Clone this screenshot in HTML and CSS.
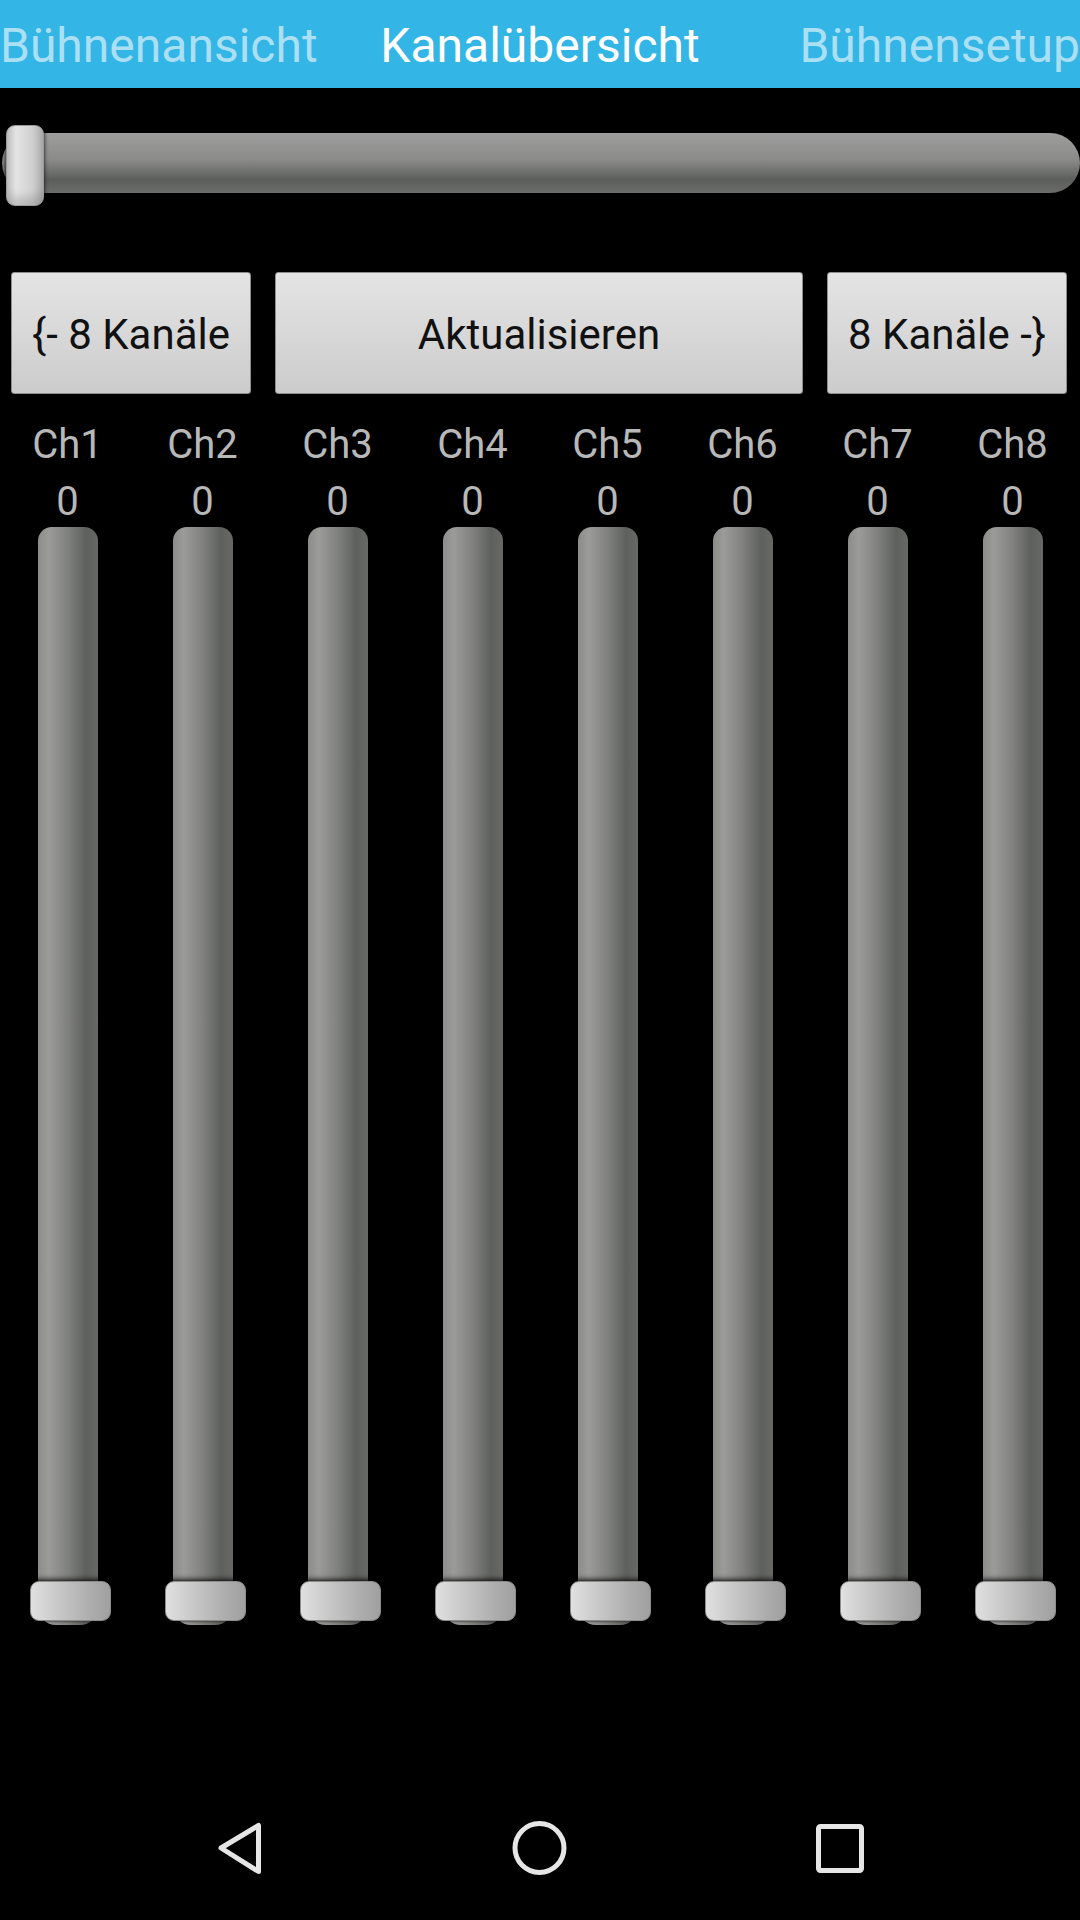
FILE: index.html
```html
<!DOCTYPE html>
<html lang="de">
<head>
    <meta charset="UTF-8">
    <meta name="viewport" content="width=device-width, initial-scale=1.0">
    <title>Kanalübersicht</title>
    <link rel="stylesheet" href="styles.css">
</head>
<body>
<div class="screen">

    <!-- Title strip -->
    <header class="tabs">
        <span class="tab">Bühnenansicht</span>
        <span class="tab active">Kanalübersicht</span>
        <span class="tab last">Bühnensetup</span>
    </header>

    <!-- Master slider -->
    <div class="seek">
        <div class="seek-track"></div>
        <div class="seek-thumb"></div>
    </div>

    <!-- Buttons -->
    <div class="actions">
        <button class="btn">{- 8 Kanäle</button>
        <button class="btn">Aktualisieren</button>
        <button class="btn">8 Kanäle -}</button>
    </div>

    <!-- Channel faders -->
    <div class="channels">
        <div class="channel">
            <span class="ch-name">Ch1</span>
            <span class="ch-value">0</span>
            <div class="fader"><div class="fader-thumb"></div></div>
        </div>
        <div class="channel">
            <span class="ch-name">Ch2</span>
            <span class="ch-value">0</span>
            <div class="fader"><div class="fader-thumb"></div></div>
        </div>
        <div class="channel">
            <span class="ch-name">Ch3</span>
            <span class="ch-value">0</span>
            <div class="fader"><div class="fader-thumb"></div></div>
        </div>
        <div class="channel">
            <span class="ch-name">Ch4</span>
            <span class="ch-value">0</span>
            <div class="fader"><div class="fader-thumb"></div></div>
        </div>
        <div class="channel">
            <span class="ch-name">Ch5</span>
            <span class="ch-value">0</span>
            <div class="fader"><div class="fader-thumb"></div></div>
        </div>
        <div class="channel">
            <span class="ch-name">Ch6</span>
            <span class="ch-value">0</span>
            <div class="fader"><div class="fader-thumb"></div></div>
        </div>
        <div class="channel">
            <span class="ch-name">Ch7</span>
            <span class="ch-value">0</span>
            <div class="fader"><div class="fader-thumb"></div></div>
        </div>
        <div class="channel">
            <span class="ch-name">Ch8</span>
            <span class="ch-value">0</span>
            <div class="fader"><div class="fader-thumb"></div></div>
        </div>
    </div>

    <div class="spacer"></div>

    <!-- System navigation -->
    <nav class="navbar">
        <div class="nav-btn">
            <svg width="60" height="60" viewBox="0 0 60 60">
                <polygon points="11,30 48.5,7.5 48.5,53.5" fill="none" stroke="#e6e6e6" stroke-width="5" stroke-linejoin="round"/>
            </svg>
        </div>
        <div class="nav-btn">
            <svg width="60" height="60" viewBox="0 0 60 60">
                <circle cx="29.5" cy="30" r="24.5" fill="none" stroke="#e6e6e6" stroke-width="5"/>
            </svg>
        </div>
        <div class="nav-btn">
            <svg width="60" height="60" viewBox="0 0 60 60">
                <rect x="8.5" y="8.5" width="43" height="44" rx="2" fill="none" stroke="#e6e6e6" stroke-width="5"/>
            </svg>
        </div>
    </nav>

</div>
</body>
</html>
```

FILE: styles.css
```css
/* General Page Styling */
body {
    margin: 0;
    padding: 0;
    background: black;
    font-family: Roboto, 'Noto Sans', sans-serif;
    overflow: hidden;
}

.screen {
    width: 1080px;
    height: 1920px;
    display: flex;
    flex-direction: column;
}

/* Title strip */
.tabs {
    height: 88px;
    box-sizing: border-box;
    padding-top: 4px;
    background: #33b5e5;
    display: grid;
    grid-template-columns: 1fr auto 1fr;
    overflow: hidden;
    white-space: nowrap;
}

.tab {
    font-size: 48px;
    line-height: 84px;
    color: #aadff4;
}

.tab.active {
    color: white;
}

.tab.last {
    justify-self: end;
}

/* Master slider */
.seek {
    position: relative;
    height: 81px;
    margin-top: 37px;
    box-sizing: border-box;
    padding: 8px 0 0 2px;
}

.seek-track {
    height: 60px;
    border-radius: 30px;
    background: linear-gradient(180deg, #9d9d9d 0%, #8a8b89 45%, #5c5e5b 78%, #6c6d6b 100%);
}

.seek-thumb {
    position: absolute;
    left: 6px;
    top: 0;
    width: 38px;
    height: 81px;
    box-sizing: border-box;
    border-radius: 9px;
    border: 1px solid #9a9a9a;
    background: linear-gradient(90deg, #c9c9c9 0%, #e4e4e4 25%, #d0d0d0 70%, #b3b3b3 100%);
    box-shadow: 0 0 4px rgba(0, 0, 0, 0.9), inset 0 -8px 10px rgba(0, 0, 0, 0.15);
}

/* Buttons */
.actions {
    display: grid;
    grid-template-columns: 240px 1fr 240px;
    gap: 24px;
    height: 122px;
    margin-top: 66px;
    padding: 0 13px 0 11px;
}

.btn {
    font-family: Roboto, 'Noto Sans', sans-serif;
    font-size: 42px;
    color: #111;
    border: 1px solid #8e8e8e;
    border-radius: 3px;
    background: linear-gradient(180deg, #e4e4e4 0%, #d8d8d8 50%, #cccccc 100%);
    padding: 2px 0 0 0;
}

/* Channel faders */
.channels {
    display: grid;
    grid-template-columns: repeat(8, 1fr);
    margin-top: 25px;
}

.channel {
    display: flex;
    flex-direction: column;
    align-items: center;
}

.ch-name,
.ch-value {
    font-size: 40px;
    line-height: 52px;
    color: #b8b8b8;
}

.ch-value {
    margin-top: 8px;
    line-height: 46px;
}

.fader {
    position: relative;
    width: 60px;
    height: 1098px;
    margin-top: 2px;
    border-radius: 14px 14px 18px 18px;
    background: linear-gradient(90deg, #8c8d8b 0%, #9b9c9a 18%, #80817f 50%, #5e605d 80%, #686967 100%);
}

.fader-thumb {
    position: absolute;
    left: calc(50% - 38px);
    bottom: 4px;
    width: 81px;
    height: 40px;
    box-sizing: border-box;
    border-radius: 9px;
    border: 1px solid #8c8c8c;
    background: linear-gradient(90deg, #e0e0e0 0%, #c8c8c8 35%, #adadad 75%, #a0a0a0 100%);
    box-shadow: 0 -3px 4px rgba(0, 0, 0, 0.5), 0 0 3px rgba(0, 0, 0, 0.8);
}

.spacer {
    flex: 1;
}

/* System navigation */
.navbar {
    height: 144px;
    display: flex;
    justify-content: center;
    align-items: center;
}

.nav-btn {
    width: 300px;
    display: flex;
    justify-content: center;
}
```
